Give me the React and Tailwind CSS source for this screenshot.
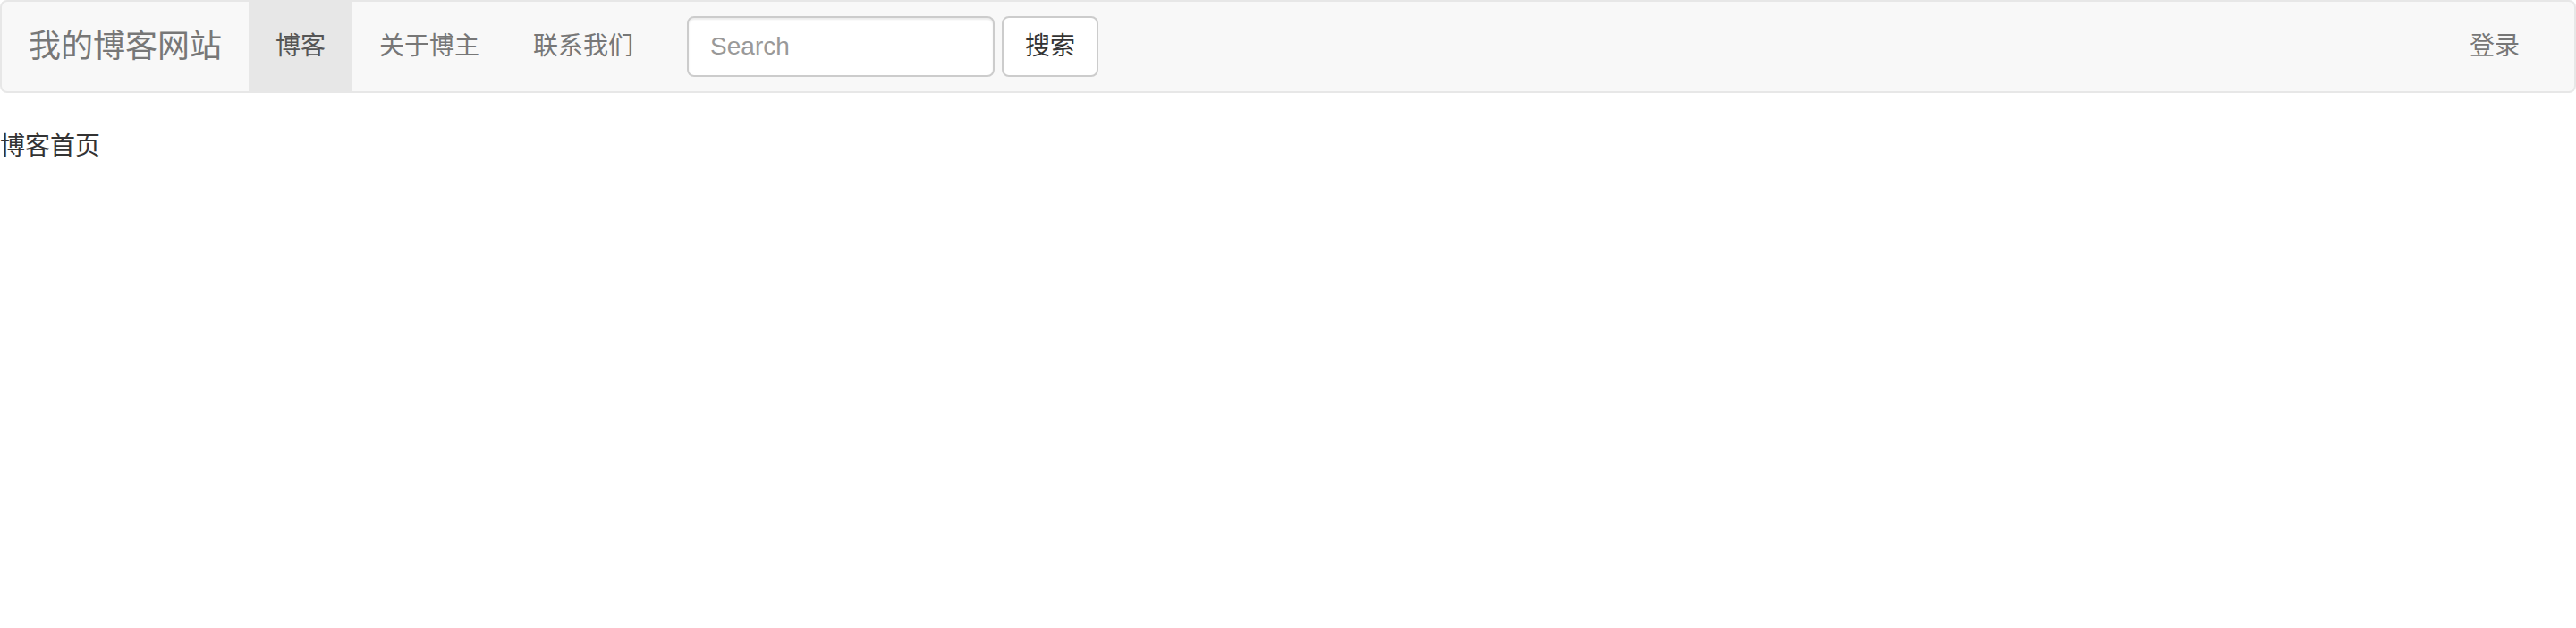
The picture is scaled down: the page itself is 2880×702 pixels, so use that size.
export default function App() {
  const font = { fontFamily: '"Liberation Sans", "Noto Sans CJK SC", sans-serif' };
  return (
    <div style={font} className="text-[28px] leading-[40px] text-[#333] bg-white min-h-[702px]">
      <nav className="flex items-start min-h-[100px] border-2 border-[#e7e7e7] bg-[#f8f8f8] rounded-lg mb-[40px]">
        <a className="block h-[100px] px-[30px] py-[30px] text-[36px] leading-[40px] text-[#777]">我的博客网站</a>
        <ul className="flex">
          <li><a className="block px-[30px] py-[30px] leading-[40px] text-[#555] bg-[#e7e7e7]">博客</a></li>
          <li><a className="block px-[30px] py-[30px] leading-[40px] text-[#777]">关于博主</a></li>
          <li><a className="block px-[30px] py-[30px] leading-[40px] text-[#777]">联系我们</a></li>
        </ul>
        <form className="flex items-center gap-[8px] px-[30px] mt-[16px]" onSubmit={(e) => e.preventDefault()}>
          <input
            type="text"
            placeholder="Search"
            style={font}
            className="w-[344px] h-[68px] px-[24px] py-[12px] text-[28px] leading-[40px] text-[#555] bg-white border-2 border-[#ccc] rounded-lg shadow-[inset_0_2px_2px_rgba(0,0,0,0.075)] placeholder:text-[#999] outline-none"
          />
          <button
            type="submit"
            style={font}
            className="h-[68px] px-[24px] text-[28px] leading-[40px] text-[#333] bg-white border-2 border-[#ccc] rounded-lg"
          >
            搜索
          </button>
        </form>
        <div className="flex-1" />
        <ul className="flex mr-[31px]">
          <li><a className="block px-[30px] py-[30px] leading-[40px] text-[#777]">登录</a></li>
        </ul>
      </nav>
      <div>博客首页</div>
    </div>
  );
}
